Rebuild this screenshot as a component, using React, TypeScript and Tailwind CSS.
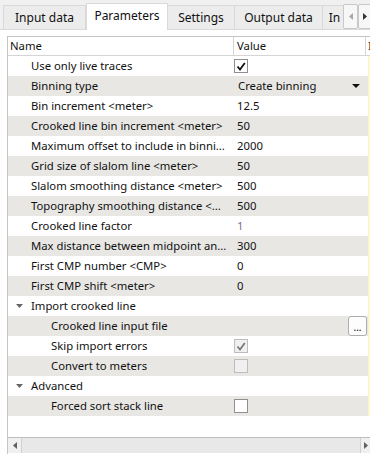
import React from 'react';

type Row = {
  name: string;
  value?: string;
  kind?: 'check' | 'combo' | 'text' | 'file' | 'group';
  checked?: boolean;
  disabled?: boolean;
  level?: number;
  dim?: boolean;
};

const rows: Row[] = [
  { name: 'Use only live traces', kind: 'check', checked: true },
  { name: 'Binning type', kind: 'combo', value: 'Create binning' },
  { name: 'Bin increment <meter>', value: '12.5' },
  { name: 'Crooked line bin increment <meter>', value: '50' },
  { name: 'Maximum offset to include in binni...', value: '2000' },
  { name: 'Grid size of slalom line <meter>', value: '50' },
  { name: 'Slalom smoothing distance <meter>', value: '500' },
  { name: 'Topography smoothing distance <...', value: '500' },
  { name: 'Crooked line factor', value: '1', dim: true },
  { name: 'Max distance between midpoint an...', value: '300' },
  { name: 'First CMP number <CMP>', value: '0' },
  { name: 'First CMP shift <meter>', value: '0' },
  { name: 'Import crooked line', kind: 'group' },
  { name: 'Crooked line input file', kind: 'file', level: 1 },
  { name: 'Skip import errors', kind: 'check', checked: true, disabled: true, level: 1 },
  { name: 'Convert to meters', kind: 'check', checked: false, disabled: true, level: 1 },
  { name: 'Advanced', kind: 'group' },
  { name: 'Forced sort stack line', kind: 'check', checked: false, level: 1 },
];

const tabs = [
  { label: 'Input data', w: 83 },
  { label: 'Parameters', w: 82, active: true },
  { label: 'Settings', w: 67 },
  { label: 'Output data', w: 88 },
  { label: 'In', w: 24 },
];

function CheckBox({ checked, disabled }: { checked?: boolean; disabled?: boolean }) {
  return (
    <div
      className={`w-[14px] h-[14px] border flex items-center justify-center ${
        disabled ? 'border-[#bcbcbc] bg-[#f0f0f0]' : 'border-[#8f8f8f] bg-white'
      }`}
    >
      {checked && (
        <svg width="10" height="9" viewBox="0 0 10 9">
          <path
            d="M1.5 4.5 L4 7.5 L8.8 1"
            fill="none"
            stroke={disabled ? '#7a7a7a' : '#111'}
            strokeWidth="1.8"
          />
        </svg>
      )}
    </div>
  );
}

function TreeRow({ row, index }: { row: Row; index: number }) {
  const bg = index % 2 === 0 ? 'bg-white' : 'bg-[#e8e7e4]';
  const indent = row.level ? 'pl-[43px]' : 'pl-[23px]';
  return (
    <div className={`flex h-[20px] leading-[20px] ${bg}`}>
      <div className={`w-[226px] shrink-0 flex items-center relative ${indent}`}>
        {row.kind === 'group' && (
          <svg className="absolute left-[8px] top-[8px]" width="7" height="4" viewBox="0 0 7 4">
            <path d="M0 0 L7 0 L3.5 4 Z" fill="#666" />
          </svg>
        )}
        <span className="whitespace-nowrap text-[#111]">{row.name}</span>
      </div>
      <div className="w-[132px] shrink-0 flex items-center relative">
        {row.kind === 'check' && <CheckBox checked={row.checked} disabled={row.disabled} />}
        {row.kind === 'combo' && (
          <>
            <span className="pl-[4px] text-[#111]">{row.value}</span>
            <svg className="absolute left-[118px] top-[8px]" width="8" height="4" viewBox="0 0 8 4">
              <path d="M0 0 L8 0 L4 4 Z" fill="#111" />
            </svg>
          </>
        )}
        {row.kind === 'file' && (
          <div className="absolute left-[114px] top-0 w-[19px] h-[20px] border border-[#adadad] rounded-[3px] bg-[#fdfdfd] flex items-end justify-center pb-[3px] text-[10px] leading-none">
            ...
          </div>
        )}
        {(row.kind === undefined || row.kind === 'text') && (
          <span className={`pl-[3px] ${row.dim ? 'text-[#7d6f8a]' : 'text-[#111]'}`}>{row.value}</span>
        )}
      </div>
      <div className="flex-1 flex items-stretch">
        <div className="w-[2px] bg-[#fbf7c8] ml-[2px]" />
      </div>
    </div>
  );
}

export default function App() {
  return (
    <div
      className="w-[370px] h-[454px] overflow-hidden bg-[#f0f0f0] text-[11.3px] leading-none flex flex-col"
      style={{ fontFamily: '"Noto Sans", "Open Sans", sans-serif' }}
    >
      {/* tab bar */}
      <div className="h-[30px] flex items-end pl-[3px] relative shrink-0 border-b border-[#d9d9d9]">
        {tabs.map((t) =>
          t.active ? (
            <div
              key={t.label}
              style={{ width: t.w }}
              className="h-[27px] -mb-px bg-white border border-b-0 border-[#d9d9d9] flex items-center justify-center text-[#111] z-10 pb-[2px] text-[12px]"
            >
              {t.label}
            </div>
          ) : (
            <div
              key={t.label}
              style={{ width: t.w }}
              className="h-[24px] bg-[#ececec] border border-b-0 border-l-0 first:border-l border-[#d9d9d9] flex items-center justify-center text-[#111] overflow-hidden whitespace-nowrap text-[12px]"
            >
              {t.label}
            </div>
          )
        )}
        <div className="absolute right-[-2px] top-[4px] flex z-20">
          <div className="w-[15px] h-[25px] border border-[#c8c8c8] rounded-[2px] bg-[#f7f7f7] flex items-center justify-center">
            <svg width="4" height="7" viewBox="0 0 4 7">
              <path d="M4 0 L0 3.5 L4 7 Z" fill="#a8a8a8" />
            </svg>
          </div>
          <div className="w-[14px] h-[25px] border border-[#c8c8c8] rounded-[2px] bg-[#f7f7f7] flex items-center justify-center">
            <svg width="4" height="7" viewBox="0 0 4 7">
              <path d="M0 0 L4 3.5 L0 7 Z" fill="#333" />
            </svg>
          </div>
        </div>
      </div>

      {/* pane */}
      <div className="flex-1 bg-white pl-[7px] pt-[6px] flex flex-col">
        <div className="flex-1 border-l border-t border-[#c4c4c4] bg-white flex flex-col overflow-hidden">
          {/* header */}
          <div className="h-[19px] flex border-b border-[#d5d5d5] shrink-0">
            <div className="w-[226px] shrink-0 flex items-center pl-[2px] border-r border-[#d5d5d5] text-[#111]">
              Name
            </div>
            <div className="w-[132px] shrink-0 flex items-center pl-[3px] border-r border-[#d5d5d5] text-[#111]">
              Value
            </div>
            <div className="flex-1 flex items-center pl-[2px] text-[#5a1a1a] overflow-hidden">I</div>
          </div>
          {rows.map((r, i) => (
            <TreeRow key={r.name} row={r} index={i} />
          ))}
          <div className="flex-1" />
          {/* horizontal scrollbar */}
          <div className="h-[16px] shrink-0 flex border-t border-[#bdbdbd] bg-[#e8e8e8] mb-[1px]">
            <div className="w-[14px] flex items-center justify-center bg-[#f0f0f0] border-r border-[#d0d0d0]">
              <svg width="4" height="7" viewBox="0 0 4 7">
                <path d="M4 0 L0 3.5 L4 7 Z" fill="#606060" />
              </svg>
            </div>
            <div className="flex-1" />
            <div className="w-[10px] flex items-center justify-center bg-[#f0f0f0] border-l border-[#d0d0d0]">
              <svg width="4" height="7" viewBox="0 0 4 7">
                <path d="M0 0 L4 3.5 L0 7 Z" fill="#606060" />
              </svg>
            </div>
          </div>
        </div>
      </div>
    </div>
  );
}
